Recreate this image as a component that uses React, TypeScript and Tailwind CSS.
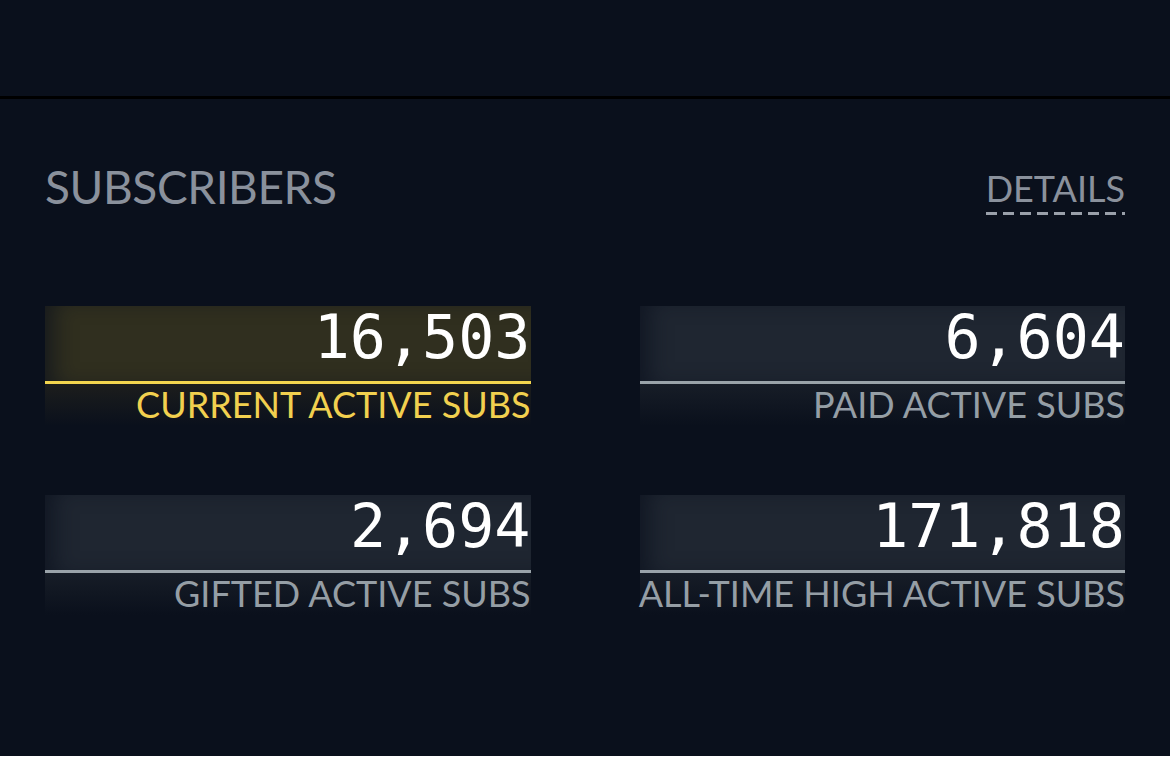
const stats = [
  { value: "16,503", label: "CURRENT ACTIVE SUBS", active: true },
  { value: "6,604", label: "PAID ACTIVE SUBS", active: false },
  { value: "2,694", label: "GIFTED ACTIVE SUBS", active: false },
  { value: "171,818", label: "ALL-TIME HIGH ACTIVE SUBS", active: false },
];

function StatCard({ value, label, active }: { value: string; label: string; active: boolean }) {
  return (
    <div className="flex flex-col">
      <div
        className={`flex h-[75px] items-end justify-end pb-[14px] shadow-[inset_16px_0_22px_-8px_rgba(10,16,28,0.7)] ${
          active ? "bg-[#302f1f]" : "bg-[#1f2631]"
        }`}
      >
        <span className="font-['DejaVu_Sans_Mono',monospace] text-[60px] leading-none text-white">
          {value}
        </span>
      </div>
      <div className={`h-[3px] ${active ? "bg-[#f3d54e]" : "bg-[#9aa3a9]"}`} />
      <div
        className={`flex h-[42px] justify-end whitespace-nowrap pt-[2px] ${
          active
            ? "bg-gradient-to-b from-[#1c1d1c] to-[#0a101c]"
            : "bg-gradient-to-b from-[#171d27] to-[#0a101c]"
        }`}
      >
        <span
          className={`font-['Lato',sans-serif] text-[36px] leading-none ${
            active ? "text-[#f1d04f]" : "text-[#959ea5]"
          }`}
        >
          {label}
        </span>
      </div>
    </div>
  );
}

export default function App() {
  return (
    <div className="h-[756px] bg-[#0a101c] font-['Lato',sans-serif]">
      <div className="h-[99px] border-b-[3px] border-black" />
      <div className="px-[45px]">
        <div className="mt-[65px] flex items-start justify-between">
          <h2 className="text-[46px] font-normal leading-none tracking-[-0.4px] text-[#8a919c]">
            SUBSCRIBERS
          </h2>
          <div className="mt-[6px] flex flex-col">
            <span className="text-[36px] leading-none text-[#8a919c]">DETAILS</span>
            <div className="mt-[6px] h-[3px] bg-[repeating-linear-gradient(90deg,#9aa0aa_0_11px,transparent_11px_17px)]" />
          </div>
        </div>
        <div className="mt-[91px] grid grid-cols-2 gap-x-[109px] gap-y-[69px]">
          {stats.map((s) => (
            <StatCard key={s.label} {...s} />
          ))}
        </div>
      </div>
    </div>
  );
}
